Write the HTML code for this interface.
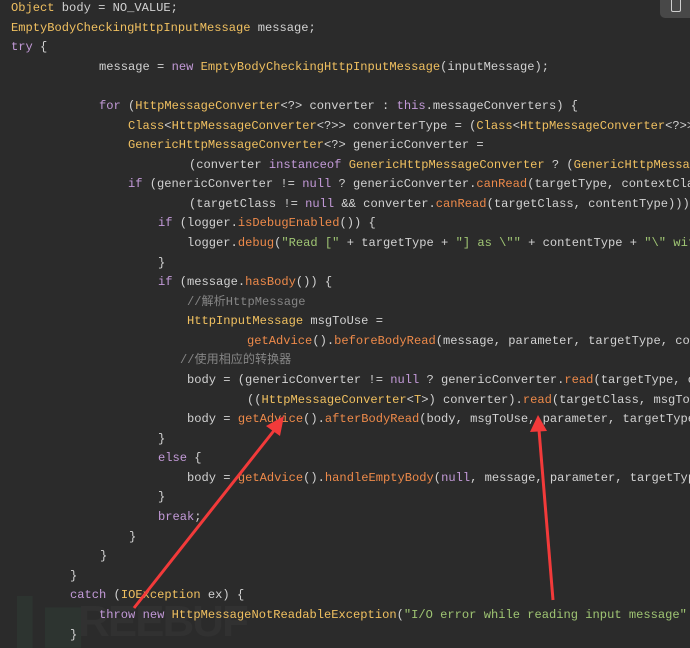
<!DOCTYPE html>
<html><head><meta charset="utf-8"><style>
html,body{margin:0;padding:0;width:690px;height:648px;overflow:hidden;background:#2b2b2b;}
#w{position:absolute;left:0;top:0;width:690px;height:648px;overflow:hidden;}
.l{position:absolute;white-space:pre;font-family:"Liberation Mono","Noto Sans CJK SC",monospace;font-size:12.1px;line-height:20px;height:20px;color:#d2d2d2;}
.k{color:#c39ad8}.t{color:#f0c060}.m{color:#ee8a4a}.s{color:#9fc573}.c{color:#858585}
.wm{position:absolute;left:17px;top:596px;font-family:"Liberation Sans",sans-serif;font-weight:bold;font-size:44px;color:#313131;letter-spacing:-2px}
</style></head><body><div id="w">
<div class="wm"><span style="color:#2d3430">▌▆</span>REEBUF</div>
<div style="position:absolute;left:660px;top:-6px;width:36px;height:24px;background:#484848;border-radius:5px;"></div>
<div style="position:absolute;left:671px;top:0;width:8px;height:11px;border:1.5px solid #cfcfcf;border-top:none;border-radius:0 0 2px 2px"></div>
<div class="l" style="left:11px;top:-2px"><span class="t">Object</span> body = NO_VALUE;</div>
<div class="l" style="left:11px;top:18px"><span class="t">EmptyBodyCheckingHttpInputMessage</span> message;</div>
<div class="l" style="left:11px;top:37px"><span class="k">try</span> {</div>
<div class="l" style="left:99px;top:57px">message = <span class="k">new</span> <span class="t">EmptyBodyCheckingHttpInputMessage</span>(inputMessage);</div>
<div class="l" style="left:99px;top:96px"><span class="k">for</span> (<span class="t">HttpMessageConverter</span>&lt;?&gt; converter : <span class="k">this</span>.messageConverters) {</div>
<div class="l" style="left:128px;top:116px"><span class="t">Class</span>&lt;<span class="t">HttpMessageConverter</span>&lt;?&gt;&gt; converterType = (<span class="t">Class</span>&lt;<span class="t">HttpMessageConverter</span>&lt;?&gt;&gt;)</div>
<div class="l" style="left:128px;top:135px"><span class="t">GenericHttpMessageConverter</span>&lt;?&gt; genericConverter =</div>
<div class="l" style="left:189px;top:155px">(converter <span class="k">instanceof</span> <span class="t">GenericHttpMessageConverter</span> ? (<span class="t">GenericHttpMessa</span></div>
<div class="l" style="left:128px;top:174px"><span class="k">if</span> (genericConverter != <span class="k">null</span> ? genericConverter.<span class="m">canRead</span>(targetType, contextClass</div>
<div class="l" style="left:189px;top:194px">(targetClass != <span class="k">null</span> &amp;&amp; converter.<span class="m">canRead</span>(targetClass, contentType))) {</div>
<div class="l" style="left:158px;top:213px"><span class="k">if</span> (logger.<span class="m">isDebugEnabled</span>()) {</div>
<div class="l" style="left:187px;top:233px">logger.<span class="m">debug</span>(<span class="s">"Read ["</span> + targetType + <span class="s">"] as \""</span> + contentType + <span class="s">"\" with</span></div>
<div class="l" style="left:158px;top:253px">}</div>
<div class="l" style="left:158px;top:272px"><span class="k">if</span> (message.<span class="m">hasBody</span>()) {</div>
<div class="l" style="left:187px;top:292px"><span class="c">//解析HttpMessage</span></div>
<div class="l" style="left:187px;top:311px"><span class="t">HttpInputMessage</span> msgToUse =</div>
<div class="l" style="left:247px;top:331px"><span class="m">getAdvice</span>().<span class="m">beforeBodyRead</span>(message, parameter, targetType, conv</div>
<div class="l" style="left:180px;top:350px"><span class="c">//使用相应的转换器</span></div>
<div class="l" style="left:187px;top:370px">body = (genericConverter != <span class="k">null</span> ? genericConverter.<span class="m">read</span>(targetType, co</div>
<div class="l" style="left:247px;top:390px">((<span class="t">HttpMessageConverter</span>&lt;<span class="t">T</span>&gt;) converter).<span class="m">read</span>(targetClass, msgToUse</div>
<div class="l" style="left:187px;top:409px">body = <span class="m">getAdvice</span>().<span class="m">afterBodyRead</span>(body, msgToUse, parameter, targetType</div>
<div class="l" style="left:158px;top:429px">}</div>
<div class="l" style="left:158px;top:448px"><span class="k">else</span> {</div>
<div class="l" style="left:187px;top:468px">body = <span class="m">getAdvice</span>().<span class="m">handleEmptyBody</span>(<span class="k">null</span>, message, parameter, targetType</div>
<div class="l" style="left:158px;top:487px">}</div>
<div class="l" style="left:158px;top:507px"><span class="k">break</span>;</div>
<div class="l" style="left:129px;top:527px">}</div>
<div class="l" style="left:100px;top:546px">}</div>
<div class="l" style="left:70px;top:566px">}</div>
<div class="l" style="left:70px;top:585px"><span class="k">catch</span> (<span class="t">IOException</span> ex) {</div>
<div class="l" style="left:99px;top:605px"><span class="k">throw</span> <span class="k">new</span> <span class="t">HttpMessageNotReadableException</span>(<span class="s">"I/O error while reading input message"</span></div>
<div class="l" style="left:70px;top:625px">}</div>
<svg width="690" height="648" style="position:absolute;left:0;top:0">
<line x1="134" y1="608" x2="276" y2="428" stroke="#f23a3a" stroke-width="3"/>
<polygon points="284,416 266,426 280,436" fill="#f23a3a"/>
<line x1="553" y1="600" x2="539" y2="430" stroke="#f23a3a" stroke-width="3"/>
<polygon points="538,415 530,432 547,431" fill="#f23a3a"/>
</svg>
</div></body></html>
